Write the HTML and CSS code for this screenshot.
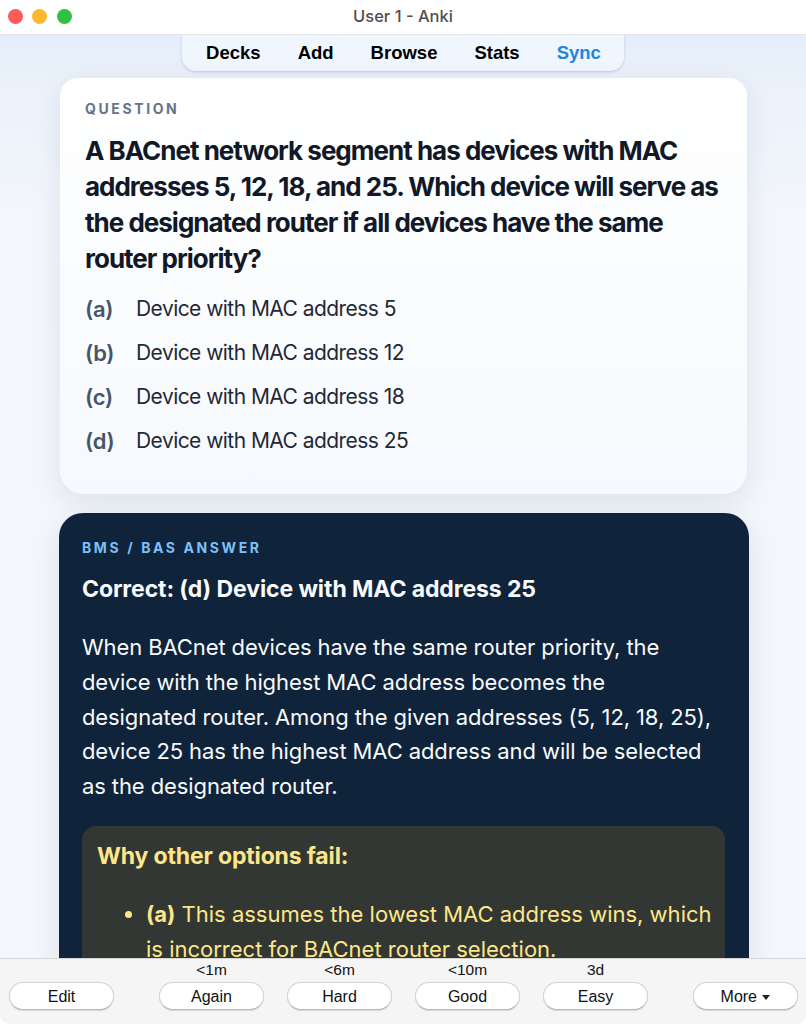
FILE: index.html
```html
<!DOCTYPE html>
<html lang="en">
<head>
<meta charset="utf-8">
<title>User 1 - Anki</title>
<link rel="stylesheet" href="styles.css">
</head>
<body>
<div class="window">
	<header class="titlebar">
		<div class="lights">
			<span class="light red"></span>
			<span class="light yellow"></span>
			<span class="light green"></span>
		</div>
		<div class="title">User 1 - Anki</div>
	</header>

	<main class="content">
		<nav class="toolbar">
			<a>Decks</a>
			<a>Add</a>
			<a>Browse</a>
			<a>Stats</a>
			<a class="sync">Sync</a>
		</nav>

		<section class="card question">
			<div class="label">QUESTION</div>
			<h1>A BACnet network segment has devices with MAC addresses 5, 12, 18, and 25. Which device will serve as the designated router if all devices have the same router priority?</h1>
			<ul class="options">
				<li><b>(a)</b><span>Device with MAC address 5</span></li>
				<li><b>(b)</b><span>Device with MAC address 12</span></li>
				<li><b>(c)</b><span>Device with MAC address 18</span></li>
				<li><b>(d)</b><span>Device with MAC address 25</span></li>
			</ul>
		</section>

		<section class="card answer">
			<div class="label">BMS / BAS ANSWER</div>
			<h2>Correct: (d) Device with MAC address 25</h2>
			<p>When BACnet devices have the same router priority, the device with the highest MAC address becomes the designated router. Among the given addresses (5, 12, 18, 25), device 25 has the highest MAC address and will be selected as the designated router.</p>
			<div class="fail">
				<h3>Why other options fail:</h3>
				<ul>
					<li><b>(a)</b> This assumes the lowest MAC address wins, which is incorrect for BACnet router selection.</li>
				</ul>
			</div>
		</section>
	</main>

	<footer class="bottombar">
		<div class="slot"><span class="due"></span><button>Edit</button></div>
		<div class="answers">
			<div class="slot"><span class="due">&lt;1m</span><button>Again</button></div>
			<div class="slot"><span class="due">&lt;6m</span><button>Hard</button></div>
			<div class="slot"><span class="due">&lt;10m</span><button>Good</button></div>
			<div class="slot"><span class="due">3d</span><button>Easy</button></div>
		</div>
		<div class="slot"><span class="due"></span><button>More <i class="caret"></i></button></div>
	</footer>
</div>
</body>
</html>
```

FILE: styles.css
```css
html, body { margin: 0; height: 100%; background: #fff; }
ul, h1, h2, h3, p { margin: 0; padding: 0; }
ul { list-style: none; }

.window {
	display: flex;
	flex-direction: column;
	height: 1024px;
	overflow: hidden;
	border-radius: 0 0 10px 10px;
	font-family: Inter, "Liberation Sans", sans-serif;
}

.titlebar {
	position: relative;
	flex: none;
	height: 35px;
	background: #fff;
	border-bottom: 1px solid #e4e6e9;
	box-sizing: border-box;
	display: flex;
	align-items: center;
	justify-content: center;
}
.lights {
	position: absolute;
	left: 7.5px;
	top: 9px;
	display: flex;
	gap: 9.5px;
}
.light { width: 15px; height: 15px; border-radius: 50%; }
.red { background: #fc5b57; }
.yellow { background: #fdb72e; }
.green { background: #2fc242; }
.title {
	margin-top: -3px;
	font-size: 16.5px;
	font-weight: 500;
	color: #4f4f4f;
}

.content {
	flex: 1;
	min-height: 0;
	overflow: hidden;
	background: linear-gradient(180deg, #e4eefa 0, #edf3fb 70px, #f3f6fb 180px, #f3f6fc 100%);
}

.toolbar {
	width: 442px;
	height: 36px;
	margin: 0 auto 7px;
	box-sizing: border-box;
	padding-left: 1px;
	display: flex;
	justify-content: center;
	align-items: center;
	gap: 37px;
	background: #eff6fe;
	border-radius: 0 0 14px 14px;
	box-shadow: 0 1px 3px rgba(40, 60, 90, 0.22);
	font: bold 18.5px "Liberation Sans", sans-serif;
	color: #000;
}
.sync { color: #1f86dc; }

.card { box-sizing: border-box; }
.label {
	font-size: 14px;
	font-weight: 700;
	letter-spacing: 2.6px;
	line-height: 18px;
}

.question {
	width: 687px;
	height: 416px;
	margin: 0 0 19px 60px;
	padding: 22px 25px 0;
	background: linear-gradient(180deg, #fff 0, #f6f9fd 100%);
	border-radius: 18px 18px 24px 24px;
	box-shadow: 0 8px 28px rgba(30, 50, 80, 0.1);
	color: #1f2937;
}
.question .label { color: #64748b; }
.question h1 {
	margin-top: 15px;
	font-size: 26px;
	font-weight: 700;
	line-height: 36px;
	letter-spacing: -1px;
	color: #111827;
}
.options { margin-top: 10px; }
.options li {
	display: flex;
	font-size: 21px;
	line-height: 44px;
	letter-spacing: -0.55px;
}
.options b {
	width: 51px;
	font-weight: 600;
	font-size: 22px;
	letter-spacing: -0.3px;
	color: #475569;
}

.answer {
	width: 690px;
	height: 600px;
	margin-left: 59px;
	padding: 26px 27px 0 23px;
	background: #0f233b;
	border-radius: 24px;
	box-shadow: 0 8px 28px rgba(30, 50, 80, 0.1);
	color: #f8fafc;
}
.answer .label { color: #7cc0f8; }
.answer h2 {
	margin-top: 15px;
	font-size: 23px;
	font-weight: 700;
	line-height: 34px;
	letter-spacing: -0.1px;
}
.answer p {
	margin-top: 24px;
	font-size: 22px;
	line-height: 34.8px;
	letter-spacing: -0.1px;
}

.fail {
	margin-top: 22px;
	width: 643px;
	height: 300px;
	box-sizing: border-box;
	padding: 14px 5px 14px 15px;
	background: #333733;
	border-radius: 14px;
	color: #fde68a;
}
.fail h3 {
	font-size: 23px;
	font-weight: 700;
	line-height: 32px;
	letter-spacing: -0.15px;
}
.fail ul {
	margin-top: 25px;
	padding-left: 49px;
	list-style: disc;
}
.fail li {
	font-size: 22px;
	line-height: 35px;
}

.bottombar {
	flex: none;
	height: 66px;
	box-sizing: border-box;
	padding: 0 8px 0 9px;
	background: #f5f5f5;
	border-top: 1px solid #d4d4d4;
	display: flex;
	justify-content: space-between;
	font: 16px "Liberation Sans", sans-serif;
	color: #111;
}
.answers { display: flex; gap: 23px; }
.slot { display: flex; flex-direction: column; align-items: center; }
.due { height: 23px; line-height: 22px; font-size: 15.5px; }
.slot button {
	width: 105px;
	height: 28px;
	padding: 1px 0 0;
	font: inherit;
	color: #111;
	background: #fff;
	border: 1px solid #d3d3d3;
	border-bottom-color: #b5b5b5;
	border-radius: 14px;
	box-shadow: 0 1px 1px rgba(0, 0, 0, 0.12);
}
.caret {
	display: inline-block;
	margin-left: 1px;
	vertical-align: 2px;
	border: 4px solid transparent;
	border-top: 5px solid #222;
	border-bottom: 0;
}
```
